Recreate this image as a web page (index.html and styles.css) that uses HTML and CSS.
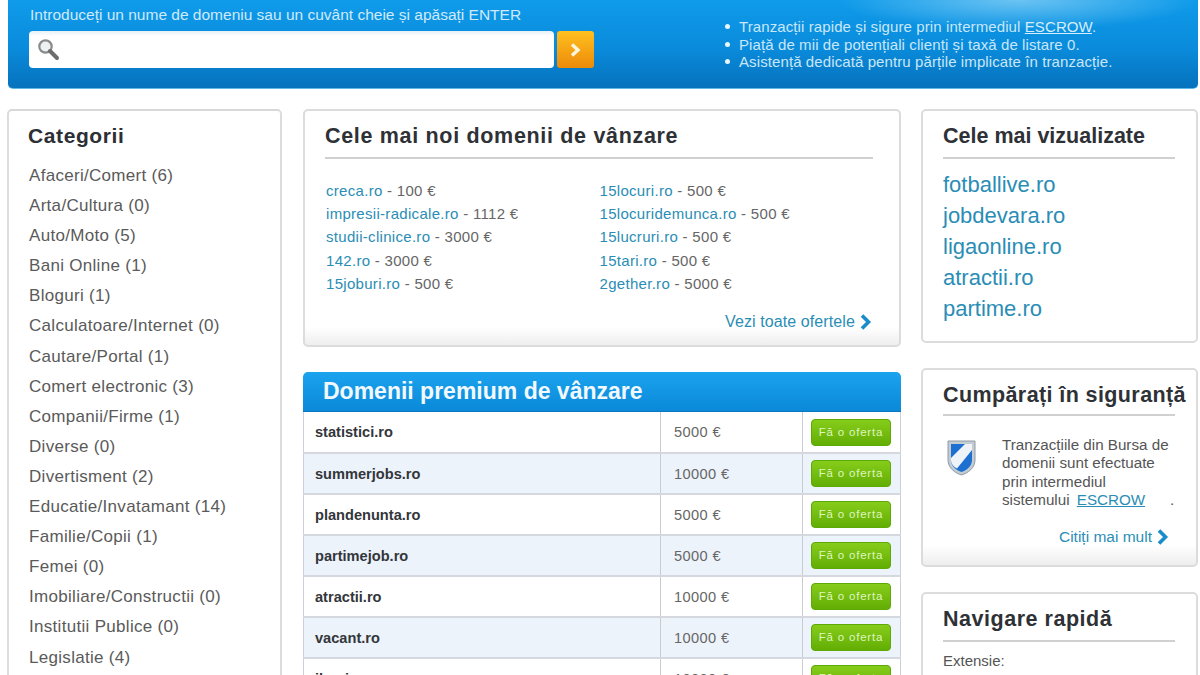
FILE: index.html
```html
<!DOCTYPE html>
<html lang="ro">
<head>
<meta charset="utf-8">
<title>Bursa de domenii</title>
<link rel="stylesheet" href="styles.css">
</head>
<body>
<header class="hero">
  <div class="search">
    <p class="search-label">Introduceți un nume de domeniu sau un cuvânt cheie și apăsați ENTER</p>
    <div class="search-row">
      <div class="search-box">
        <svg class="lens" width="24" height="24" viewBox="0 0 24 24"><circle cx="9.5" cy="9.5" r="6.2" fill="#eef1f3" stroke="#8a8a8a" stroke-width="2.2"/><path d="M14 14l7 7" stroke="#6d6d6d" stroke-width="4" stroke-linecap="round"/></svg>
      </div>
      <div class="search-go"><svg width="12" height="14" viewBox="0 0 12 14"><path d="M2 1.5l6 5.5-6 5.5" fill="none" stroke="#fff6df" stroke-width="3.4"/></svg></div>
    </div>
  </div>
  <ul class="perks">
    <li>Tranzacții rapide și sigure prin intermediul <a href="#">ESCROW</a>.</li>
    <li>Piață de mii de potențiali clienți și taxă de listare 0.</li>
    <li>Asistență dedicată pentru părțile implicate în tranzacție.</li>
  </ul>
</header>

<main class="columns">
  <aside class="card cats">
    <h2 class="cats-title">Categorii</h2>
    <ul class="cat-list">
      <li>Afaceri/Comert (6)</li>
      <li>Arta/Cultura (0)</li>
      <li>Auto/Moto (5)</li>
      <li>Bani Online (1)</li>
      <li>Bloguri (1)</li>
      <li>Calculatoare/Internet (0)</li>
      <li>Cautare/Portal (1)</li>
      <li>Comert electronic (3)</li>
      <li>Companii/Firme (1)</li>
      <li>Diverse (0)</li>
      <li>Divertisment (2)</li>
      <li>Educatie/Invatamant (14)</li>
      <li>Familie/Copii (1)</li>
      <li>Femei (0)</li>
      <li>Imobiliare/Constructii (0)</li>
      <li>Institutii Publice (0)</li>
      <li>Legislatie (4)</li>
    </ul>
  </aside>

  <section class="center">
    <div class="card newest">
      <h2 class="title title-newest">Cele mai noi domenii de vânzare</h2>
      <div class="offers">
        <ul>
          <li><a href="#">creca.ro</a> - 100 €</li>
          <li><a href="#">impresii-radicale.ro</a> - 1112 €</li>
          <li><a href="#">studii-clinice.ro</a> - 3000 €</li>
          <li><a href="#">142.ro</a> - 3000 €</li>
          <li><a href="#">15joburi.ro</a> - 500 €</li>
        </ul>
        <ul>
          <li><a href="#">15locuri.ro</a> - 500 €</li>
          <li><a href="#">15locuridemunca.ro</a> - 500 €</li>
          <li><a href="#">15lucruri.ro</a> - 500 €</li>
          <li><a href="#">15tari.ro</a> - 500 €</li>
          <li><a href="#">2gether.ro</a> - 5000 €</li>
        </ul>
      </div>
      <a class="more" href="#">Vezi toate ofertele <svg width="14" height="16" viewBox="0 0 14 16"><path d="M3 1.500l6.500 6.500-6.500 6.500" fill="none" stroke="#1a8ccc" stroke-width="3.600"/></svg></a>
    </div>

    <div class="premium">
      <h2 class="premium-title">Domenii premium de vânzare</h2>
      <table class="premium-table">
        <tr><td class="dom">statistici.ro</td><td class="price">5000 €</td><td class="act"><span class="btn">Fă o oferta</span></td></tr>
        <tr class="alt"><td class="dom">summerjobs.ro</td><td class="price">10000 €</td><td class="act"><span class="btn">Fă o oferta</span></td></tr>
        <tr><td class="dom">plandenunta.ro</td><td class="price">5000 €</td><td class="act"><span class="btn">Fă o oferta</span></td></tr>
        <tr class="alt"><td class="dom">partimejob.ro</td><td class="price">5000 €</td><td class="act"><span class="btn">Fă o oferta</span></td></tr>
        <tr><td class="dom">atractii.ro</td><td class="price">10000 €</td><td class="act"><span class="btn">Fă o oferta</span></td></tr>
        <tr class="alt"><td class="dom">vacant.ro</td><td class="price">10000 €</td><td class="act"><span class="btn">Fă o oferta</span></td></tr>
        <tr><td class="dom">ilumina.ro</td><td class="price">10000 €</td><td class="act"><span class="btn">Fă o oferta</span></td></tr>
      </table>
    </div>
  </section>

  <aside class="side">
    <div class="card viewed">
      <h2 class="title title-viewed">Cele mai vizualizate</h2>
      <ul class="viewed-list">
        <li><a href="#">fotballive.ro</a></li>
        <li><a href="#">jobdevara.ro</a></li>
        <li><a href="#">ligaonline.ro</a></li>
        <li><a href="#">atractii.ro</a></li>
        <li><a href="#">partime.ro</a></li>
      </ul>
    </div>
    <div class="card safe">
      <h2 class="title title-safe">Cumpărați în siguranță</h2>
      <div class="safe-body">
        <svg class="shield" width="32" height="38" viewBox="0 0 32 38">
          <path d="M2 2h27v19c0 8-7 13-13.500 15C9 34 2 29 2 21z" fill="#c3ccd3" stroke="#8e9aa3"/>
          <path d="M5 5h21v16c0 6-5 10-10.500 12C10 31 5 27 5 21z" fill="#1d6fd0"/>
          <path d="M5 19L19 5h7v6L11 29.500c-3.500-2-6-4.500-6-8.500z" fill="#eef3f8"/>
        </svg>
        <p>Tranzacțiile din Bursa de domenii sunt efectuate prin intermediul sistemului <a class="escrow" href="#">ESCROW</a></p>
      </div>
      <a class="more" href="#">Citiți mai mult <svg width="14" height="16" viewBox="0 0 14 16"><path d="M3 1.500l6.500 6.500-6.500 6.500" fill="none" stroke="#1a8ccc" stroke-width="3.600"/></svg></a>
    </div>
    <div class="card nav">
      <h2 class="title title-nav">Navigare rapidă</h2>
      <p class="ext">Extensie:</p>
      <p class="ext-link"><a href="#">doar .ro</a></p>
    </div>
  </aside>
</main>
</body>
</html>
```
FILE: styles.css
```css
* { box-sizing: border-box; }
html, body { margin: 0; height: 675px; overflow: hidden; background: #fff; }
body { font-family: "Liberation Sans", Arial, sans-serif; color: #555; padding: 0 2px 0 7px; }
ul { list-style: none; margin: 0; padding: 0; }
p, h2 { margin: 0; }
a { color: #2a8db5; text-decoration: none; }

.hero {
  height: 89px; margin-left: 1px; display: flex;
  background: radial-gradient(ellipse 180px 30px at 1010px 0, #6cc3f2, transparent), linear-gradient(#0f9bea, #0a8bdb 55%, #0672bd);
  border-bottom: 1px solid #5cb8e8; border-radius: 0 0 5px 5px;
  padding: 7px 0 0 22px; color: #d6eefb;
}
.search { width: 695px; }
.search-label { font-size: 15.500px; line-height: 16px; color: #cfeafa; }
.search-row { display: flex; gap: 3px; margin: 8px 0 0 -1px; }
.search-box { width: 525px; height: 37px; background: linear-gradient(#e6f1f6, #fff 5px); border-radius: 4px; padding: 6px 0 0 7px; }
.lens { display: block; }
.search-go { width: 37px; height: 37px; border-radius: 3px; background: linear-gradient(#ffc01f, #ed8a0a); display: flex; align-items: center; justify-content: center; }
.perks { font-size: 15px; line-height: 17.500px; padding-top: 11px; color: #c9e7f8; letter-spacing: 0.1px; }
.perks li { position: relative; padding-left: 14px; }
.perks li::before { content: ""; position: absolute; left: 0; top: 6px; width: 5px; height: 5px; border-radius: 50%; background: #e8f6fd; }
.perks a { color: #d6eefb; text-decoration: underline; }

.columns { display: flex; align-items: flex-start; margin-top: 20px; }
.card { border: 2px solid #dcdcdc; border-radius: 5px; background: #fff; position: relative; }
.cats { width: 275px; height: 700px; padding: 13px 0 0 19px; border-top-color: #d8d8d8; }
.cats-title { font-size: 21px; line-height: 24px; color: #2c2f33; letter-spacing: 0.600px; }
.cat-list { margin: 13px 0 0 1px; font-size: 17px; line-height: 30.100px; color: #5a5a5a; letter-spacing: 0.300px; }

.center { width: 598px; margin-left: 21px; }
.title { font-size: 21.500px; line-height: 24px; font-weight: bold; color: #2e3135; border-bottom: 2px solid #d0d0d0; padding-bottom: 9px; }
.title-newest { letter-spacing: 0.680px; }
.title-viewed { white-space: nowrap; }
.title-nav { letter-spacing: 0.530px; }
.newest { height: 238px; padding: 13px 26px 0 20px; background: linear-gradient(#fff 216px, #eeeeee); }
.offers { display: flex; margin: 20px 0 0 1px; font-size: 15px; line-height: 23.200px; color: #666; letter-spacing: 0.300px; }
.offers ul { width: 274px; }
.more { position: absolute; font-size: 16px; line-height: 18px; display: flex; align-items: center; gap: 4px; color: #2a8db5; }
.newest .more { right: 26px; bottom: 14px; letter-spacing: 0.100px; }

.premium { margin-top: 25px; }
.premium-title { height: 40px; padding: 6px 0 0 20px; font-size: 23px; line-height: 27px; color: #f2f9fe; background: linear-gradient(#1ba3ee, #0a89d8); border-radius: 5px 5px 0 0; border-bottom: 1px solid #0a77c0; }
.premium-table { width: 598px; border-collapse: collapse; table-layout: fixed; font-size: 14.600px; border-left: 1px solid #ccd0d8; border-right: 1px solid #ccd0d8; }
.premium-table tr { height: 41px; }
.premium-table td { border-bottom: 2px solid #d5d8de; padding: 0; }
.alt td { background: #edf3fb; }
.dom { width: 357px; padding-left: 11px !important; font-weight: bold; color: #33363a; }
.price { width: 142px; padding-left: 13px !important; border-left: 1px solid #c8ccd2; color: #666; letter-spacing: 0.400px; }
.act { border-left: 1px solid #c8ccd2; padding-left: 8px !important; }
.btn { display: block; width: 80px; height: 27px; border-radius: 4px; background: linear-gradient(#86cc1a, #63ae05); border: 1px solid #5ea906; font-size: 11.500px; letter-spacing: 0.800px; line-height: 25px; text-align: center; color: #dff5bf; }

.side { width: 277px; margin-left: 20px; display: flex; flex-direction: column; gap: 25px; }
.side .card { padding: 13px 21px 0 20px; }
.viewed { height: 234px; }
.viewed-list { margin-top: 10px; font-size: 22px; line-height: 31px; }
.safe { height: 199px; background: linear-gradient(#fff 175px, #eeeeee); }
.side .safe .title-safe { margin-right: -12px; white-space: nowrap; border: 0; position: relative; letter-spacing: 0.400px; }
.side .safe .title-safe::after { content: ""; position: absolute; left: 0; right: 12px; bottom: 0; height: 2px; background: #d0d0d0; }
.safe-body { display: flex; padding: 20px 0 0 3px; }
.shield { flex: none; margin-top: 3px; }
.safe-body p { font-size: 15.200px; line-height: 18.300px; padding-left: 24px; color: #555; }
.escrow { text-decoration: underline; margin-left: 3px; }
.escrow::after { content: "."; color: #555; display: inline-block; margin-left: 25px; }
.safe .more { right: 26px; bottom: 19px; font-size: 15.500px; }
.nav { height: 200px; }
.ext { margin-top: 9px; font-size: 15px; line-height: 20px; color: #555; }
.ext-link { font-size: 15px; line-height: 20px; }
```
